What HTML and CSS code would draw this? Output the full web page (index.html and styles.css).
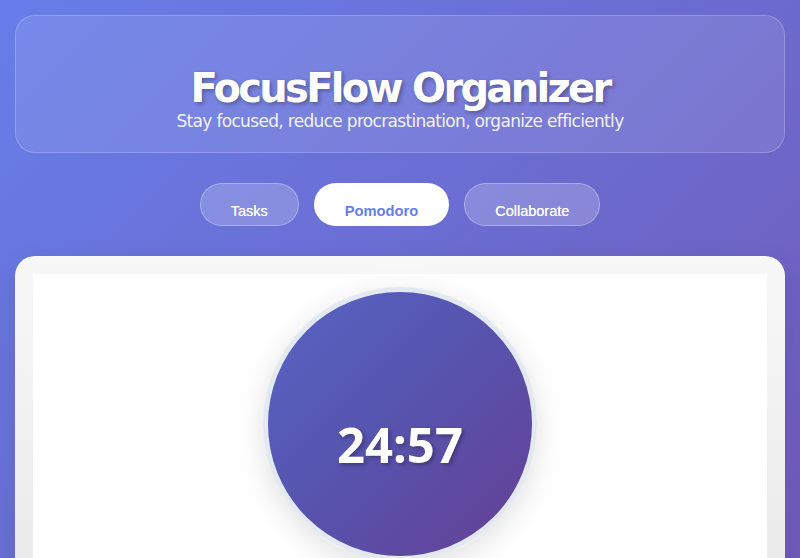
FILE: index.html
```html
<!DOCTYPE html>
<html lang="en">
<head>
<meta charset="utf-8">
<title>FocusFlow Organizer</title>
<link rel="stylesheet" href="styles.css">
</head>
<body>
  <div class="app">
    <header class="header">
      <h1 class="title">FocusFlow Organizer</h1>
      <p class="subtitle">Stay focused, reduce procrastination, organize efficiently</p>
    </header>
    <nav class="tabs">
      <button class="tab">Tasks</button>
      <button class="tab active">Pomodoro</button>
      <button class="tab">Collaborate</button>
    </nav>
    <main class="card">
      <section class="panel">
        <div class="timer-circle">
          <div class="timer-time">24:57</div>
        </div>
      </section>
    </main>
  </div>
</body>
</html>
```
FILE: styles.css
```css
* { box-sizing: border-box; }
html, body { margin: 0; padding: 0; }
body {
  font-family: "DejaVu Sans", Verdana, sans-serif;
  background: linear-gradient(135deg, #667eea 0%, #764ba2 100%);
  color: #333;
}
.app {
  padding: 15px;
  display: flex;
  flex-direction: column;
}
.header {
  background: rgba(255, 255, 255, 0.1);
  border: 1px solid rgba(255, 255, 255, 0.2);
  border-radius: 20px;
  padding: 49px 20px 19px;
  text-align: center;
  color: #fff;
  height: 138px;
}
.title {
  margin: 0;
  font-size: 40px;
  font-weight: 700;
  letter-spacing: -2.7px;
  text-shadow: 2px 2px 4px rgba(0, 0, 0, 0.3);
}
.subtitle {
  margin: 0;
  font-size: 17px;
  letter-spacing: -0.68px;
  opacity: 0.9;
}
.tabs {
  display: flex;
  justify-content: center;
  gap: 15px;
  margin: 30px 0;
}
.tab {
  font-family: "Liberation Sans", Arial, sans-serif;
  font-size: 14.5px;
  line-height: 17px;
  font-weight: 400;
  color: #fff;
  background: rgba(255, 255, 255, 0.2);
  border: 1px solid rgba(255, 255, 255, 0.3);
  border-radius: 25px;
  padding: 19px 30px 5px;
  height: 43px;
  text-shadow: 0 0 0.4px #fff;
}
.tab.active {
  background: #fff;
  color: #667eea;
  font-weight: 700;
  font-size: 14.7px;
  text-shadow: none;
}
.card {
  background: linear-gradient(180deg, #f8f8f8 0%, #ececec 30%, #ebebeb 100%);
  border-radius: 20px;
  padding: 18px;
  box-shadow: 0 10px 30px rgba(0, 0, 0, 0.1);
}
.panel {
  background: #fff;
  min-height: 893px;
  padding-top: 13px;
  display: flex;
  flex-direction: column;
  align-items: center;
}
.timer-circle {
  width: 274px;
  height: 274px;
  border-radius: 50%;
  border: 5px solid #e3e9f1;
  background: linear-gradient(135deg, #5764c4 0%, #5753ad 50%, #653f94 100%);
  box-shadow: 0 8px 30px rgba(0, 0, 0, 0.12);
  display: flex;
  align-items: center;
  justify-content: center;
  padding-top: 40px;
}
.timer-time {
  font-family: "Noto Sans", "Open Sans", sans-serif;
  font-weight: 700;
  font-size: 49px;
  color: #fff;
  text-shadow: 2px 2px 4px rgba(0, 0, 0, 0.3);
}
```
